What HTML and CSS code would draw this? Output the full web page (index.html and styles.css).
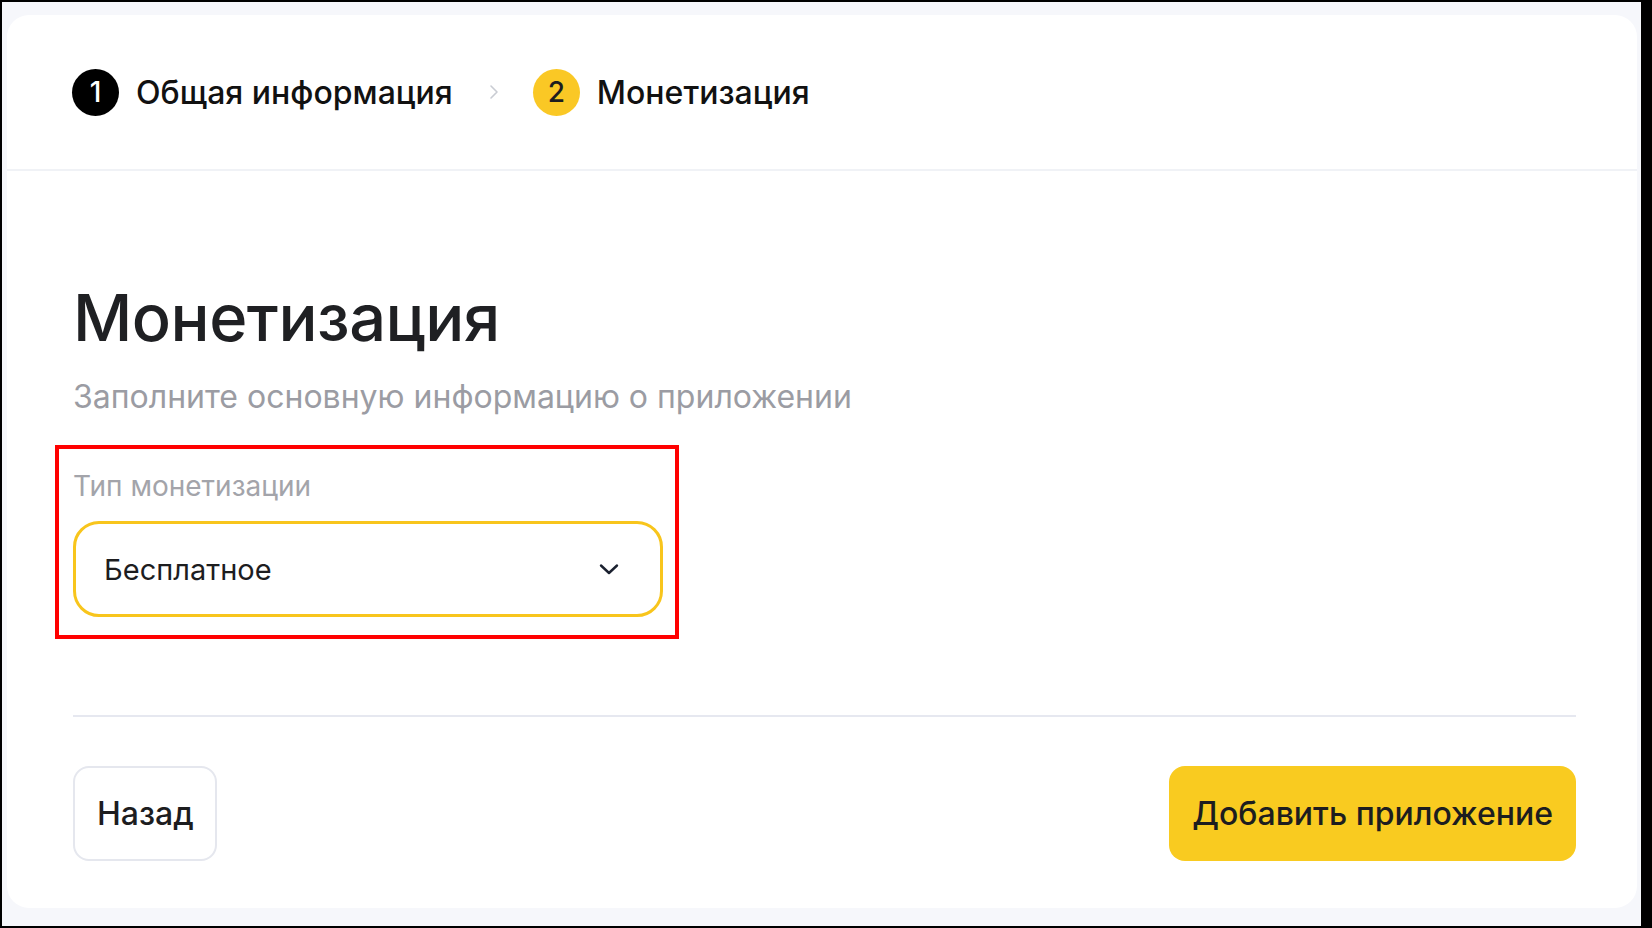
FILE: index.html
```html
<!DOCTYPE html>
<html>
<head>
  <title>Монетизация</title>
  <link rel="stylesheet" href="styles.css">
</head>
<body>

<div class="frame">
  <div class="card">

    <!-- Stepper -->
    <div class="steps">
      <div class="step">
        <span class="step-num done">1</span>
        <span class="step-title">Общая информация</span>
      </div>
      <svg class="step-sep" width="12" height="18" viewBox="0 0 12 18">
        <path d="M3 3 L9 9 L3 15" fill="none" stroke="#c9ccd3" stroke-width="1.6" stroke-linecap="round" stroke-linejoin="round"/>
      </svg>
      <div class="step">
        <span class="step-num active">2</span>
        <span class="step-title">Монетизация</span>
      </div>
    </div>

    <!-- Form -->
    <div class="content">
      <h1 class="title">Монетизация</h1>
      <p class="subtitle">Заполните основную информацию о приложении</p>

      <div class="field-mark">
        <label class="field-label">Тип монетизации</label>
        <div class="select">
          <span class="select-value">Бесплатное</span>
          <svg class="select-arrow" width="22" height="22" viewBox="0 0 22 22">
            <path d="M3 7.5 L11 15 L19 7.5" fill="none" stroke="#1b2130" stroke-width="2.4" stroke-linecap="round" stroke-linejoin="round"/>
          </svg>
        </div>
      </div>

      <div class="actions">
        <button class="btn btn-back">Назад</button>
        <button class="btn btn-primary">Добавить приложение</button>
      </div>
    </div>

  </div>
</div>

</body>
</html>
```

FILE: styles.css
```css
html, body { margin: 0; padding: 0; background: #000; }
body { font-family: Inter, "Noto Sans", Arial, sans-serif; color: #1d1d1f; }

.frame {
  margin: 2px 11px 2px 2px;
  height: 924px;
  box-sizing: border-box;
  padding: 13px 4px 18px 5px;
  background: #f6f7fb;
}
.card {
  height: 100%;
  background: #fff;
  border-radius: 22px;
  display: flex;
  flex-direction: column;
}

/* stepper */
.steps {
  display: flex;
  align-items: center;
  height: 154px;
  padding-left: 65px;
  border-bottom: 2px solid #f0f2f6;
}
.step { display: flex; align-items: center; gap: 17px; }
.step-num {
  width: 47px; height: 47px; border-radius: 50%;
  display: flex; align-items: center; justify-content: center;
  font-size: 28px; font-weight: 500;
}
.step-num.done { background: #000; color: #fff; }
.step-num.active { background: #fac825; color: #1d1d1f; }
.step-title { font-size: 32px; font-weight: 500; color: #111; }
.step-sep { margin: 0 33px 0 35px; }

/* form */
.content { flex: 1; padding: 108px 61px 0 66px; display: flex; flex-direction: column; }
.title { margin: 0; font-size: 65px; font-weight: 500; line-height: 78px; color: #1f2023; letter-spacing: -0.5px; }
.subtitle { margin: 20px 0 0; font-size: 32px; color: #9b9ca3; line-height: 40px; }

.field-mark {
  width: 590px;
  margin: 28px 0 0 -18px;
  padding: 20px 12px 18px 14px;
  border: 4px solid #ff0000;
}
.field-label { display: block; font-size: 28px; color: #a3a4aa; line-height: 34px; }
.select {
  margin-top: 18px;
  height: 96px;
  box-sizing: border-box;
  border: 3px solid #f8c51c;
  border-radius: 26px;
  display: flex; align-items: center; justify-content: space-between;
  padding: 0 40px 0 28px;
}
.select-value { font-size: 29px; color: #1d1d1f; }

.actions {
  margin-top: 76px;
  border-top: 2px solid #e6e8f0;
  padding-top: 49px;
  display: flex;
  justify-content: space-between;
}
.btn {
  height: 95px;
  border-radius: 16px;
  font-family: inherit;
  font-size: 32px;
  font-weight: 500;
  color: #1d1d1f;
  padding: 0 21px 0 22px;
  cursor: pointer;
}
.btn-back { background: #fff; border: 2px solid #e5e7ee; }
.btn-primary { background: #f9cb20; border: none; padding: 0 23px; }
```
